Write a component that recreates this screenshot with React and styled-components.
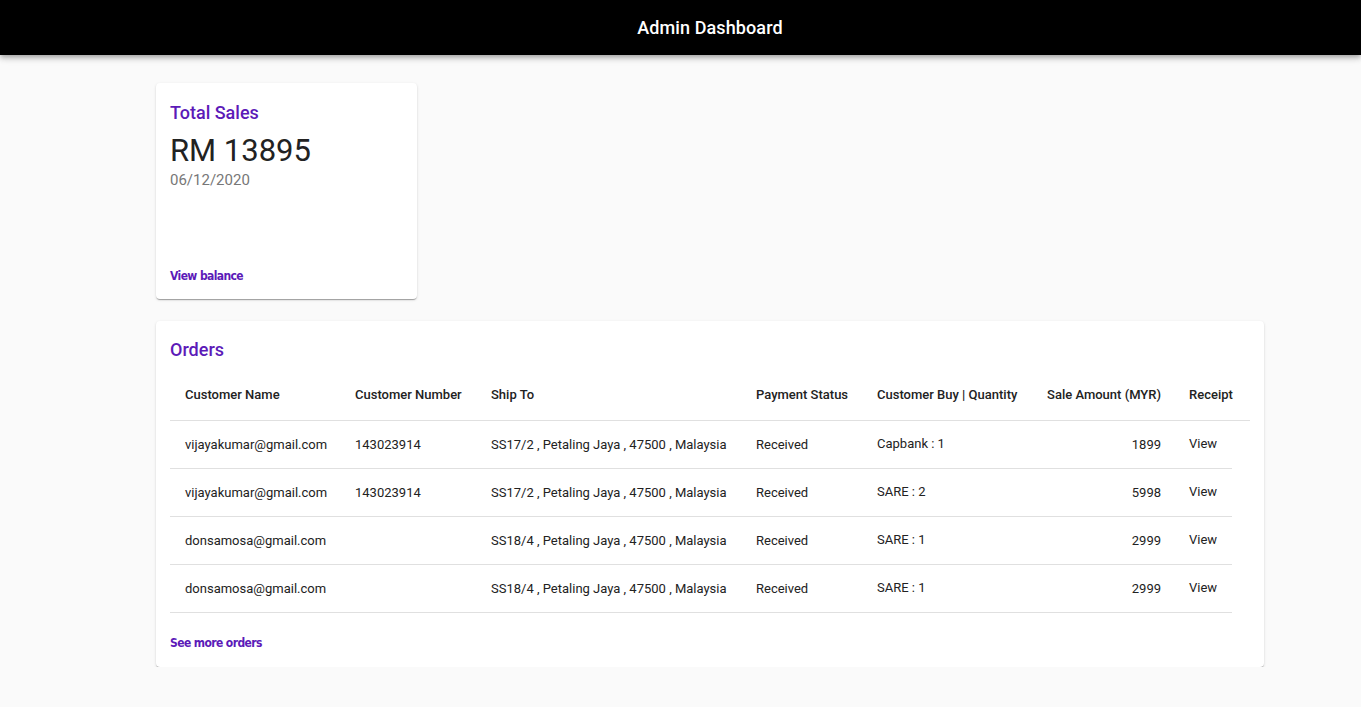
import React from "react"
import styled, { createGlobalStyle } from "styled-components"

const GlobalStyle = createGlobalStyle`
  html, body {
    margin: 0;
    padding: 0;
    background: #fafafa;
    font-family: Roboto, "Liberation Sans", sans-serif;
  }
`

const orders = [
  { name: "vijayakumar@gmail.com", number: "143023914", ship: "SS17/2 , Petaling Jaya , 47500 , Malaysia", status: "Received", buy: "Capbank : 1", amount: 1899 },
  { name: "vijayakumar@gmail.com", number: "143023914", ship: "SS17/2 , Petaling Jaya , 47500 , Malaysia", status: "Received", buy: "SARE : 2", amount: 5998 },
  { name: "donsamosa@gmail.com", number: "", ship: "SS18/4 , Petaling Jaya , 47500 , Malaysia", status: "Received", buy: "SARE : 1", amount: 2999 },
  { name: "donsamosa@gmail.com", number: "", ship: "SS18/4 , Petaling Jaya , 47500 , Malaysia", status: "Received", buy: "SARE : 1", amount: 2999 },
]

const App = () => {
  return (
    <>
      <GlobalStyle />
      <AppBar>
        <BarTitle>Admin Dashboard</BarTitle>
      </AppBar>
      <Main>
        <SalesCard>
          <CardTitle>Total Sales</CardTitle>
          <BigNumber>RM 13895</BigNumber>
          <DateText>06/12/2020</DateText>
          <Spacer />
          <CardLink>View balance</CardLink>
        </SalesCard>

        <OrdersCard>
          <CardTitle>Orders</CardTitle>
          <Table>
            <colgroup>
              <col style={{ width: 171 }} />
              <col style={{ width: 136 }} />
              <col style={{ width: 265 }} />
              <col style={{ width: 121 }} />
              <col style={{ width: 169 }} />
              <col style={{ width: 143 }} />
              <col style={{ width: 57 }} />
              <col style={{ width: 18 }} />
            </colgroup>
            <thead>
              <tr>
                <Th>Customer Name</Th>
                <Th>Customer Number</Th>
                <Th>Ship To</Th>
                <Th>Payment Status</Th>
                <Th>Customer Buy | Quantity</Th>
                <Th align="right">Sale Amount (MYR)</Th>
                <Th colSpan={2}>Receipt</Th>
              </tr>
            </thead>
            <tbody>
              {orders.map((o, i) => (
                <tr key={i}>
                  <Td>{o.name}</Td>
                  <Td>{o.number}</Td>
                  <Td>{o.ship}</Td>
                  <Td>{o.status}</Td>
                  <Td $lift>{o.buy}</Td>
                  <Td align="right">{o.amount}</Td>
                  <Td $lift>View</Td>
                  <Td $plain />
                </tr>
              ))}
            </tbody>
          </Table>
          <CardLink $top>See more orders</CardLink>
        </OrdersCard>
      </Main>
    </>
  )
}

const AppBar = styled.header`
  height: 55px;
  background: #000;
  display: flex;
  align-items: center;
  justify-content: center;
  padding-left: 59px;
  box-shadow: 0 2px 4px -1px rgba(0,0,0,0.2), 0 4px 5px 0 rgba(0,0,0,0.14), 0 1px 10px 0 rgba(0,0,0,0.12);
`

const BarTitle = styled.h1`
  margin: 0;
  color: #fff;
  font-size: 18px;
  font-weight: 500;
  letter-spacing: 0.1px;
`

const Main = styled.main`
  width: 1108px;
  margin-left: 156px;
  padding-top: 28px;
  display: flex;
  flex-direction: column;
  align-items: flex-start;
  gap: 22px;
`

const Card = styled.section`
  background: #fff;
  border-radius: 4px;
  box-shadow: 0 2px 1px -1px rgba(0,0,0,0.2), 0 1px 1px 0 rgba(0,0,0,0.14), 0 1px 3px 0 rgba(0,0,0,0.12);
  padding: 16px 14px 14px;
  box-sizing: border-box;
  display: flex;
  flex-direction: column;
`

const SalesCard = styled(Card)`
  width: 261px;
  height: 216px;
`

const OrdersCard = styled(Card)`
  width: 1108px;
  padding-top: 15px;
  padding-bottom: 15px;
`

const CardTitle = styled.h2`
  margin: 0;
  color: #5c1ab8;
  font-size: 18px;
  font-weight: 500;
  line-height: 26px;
  margin-top: 1px;
`

const BigNumber = styled.div`
  font-size: 31px;
  color: #222;
  line-height: 38px;
  margin-top: 6px;
`

const DateText = styled.div`
  font-size: 15px;
  color: #777;
  line-height: 20px;
`

const Spacer = styled.div`
  flex: 1;
`

const CardLink = styled.a`
  color: #5c1ab8;
  font-family: "DejaVu Sans Condensed", sans-serif;
  font-size: 12px;
  letter-spacing: -0.6px;
  font-weight: 700;
  cursor: pointer;
  line-height: 18px;
  margin-top: ${(p) => (p.$top ? "21px" : "0")};
`

const Table = styled.table`
  border-collapse: collapse;
  margin-top: 7px;
  width: 1080px;
  table-layout: fixed;
  font-size: 13px;
  color: #222;
`

const Th = styled.th`
  box-sizing: border-box;
  text-align: ${(p) => p.align || "left"};
  font-weight: 500;
  padding: 0 14px;
  height: 50px;
  border-bottom: 1px solid #e0e0e0;
  white-space: nowrap;
  &:first-child { padding-left: 15px; }
`

const Td = styled.td`
  box-sizing: border-box;
  text-align: ${(p) => p.align || "left"};
  padding: ${(p) => (p.$lift ? "0 14px 2px" : "0 14px")};
  height: 48px;
  border-bottom: ${(p) => (p.$plain ? "none" : "1px solid #e0e0e0")};
  white-space: nowrap;
  &:first-child { padding-left: 15px; }
`

export default App
